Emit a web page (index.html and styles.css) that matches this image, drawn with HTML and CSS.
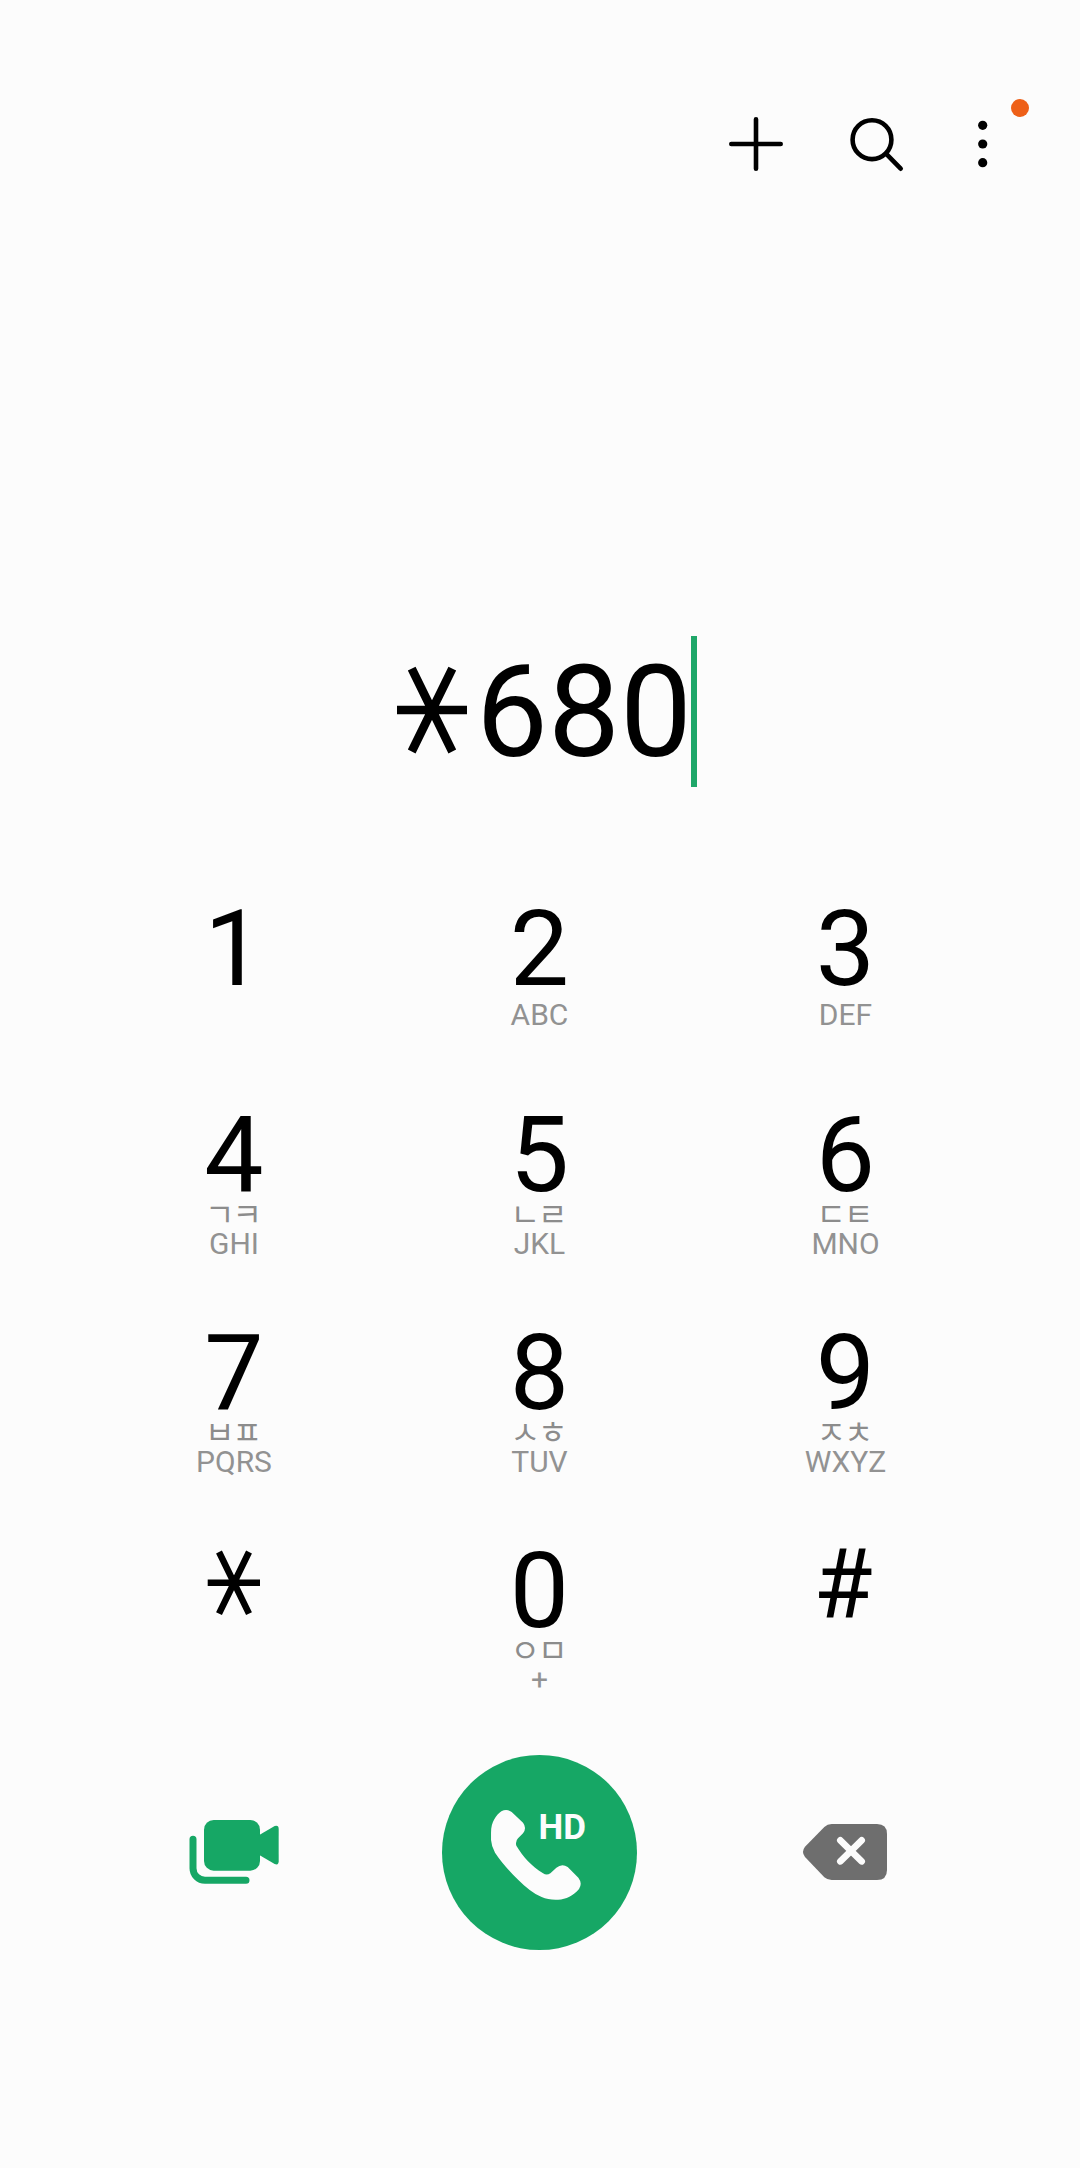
FILE: index.html
```html
<!DOCTYPE html>
<html lang="ko">
<head>
<meta charset="utf-8">
<title>Phone</title>
<link rel="stylesheet" href="styles.css">
</head>
<body>
<main class="dialer">
  <header class="toolbar">
    <svg class="tool" viewBox="0 0 60 60" aria-label="Add"><path d="M5.3 30H54.7M30 5.3V54.7"/></svg>
    <svg class="tool" viewBox="0 0 60 60" aria-label="Search"><circle cx="26" cy="25.7" r="19.4"/><path d="M40 39.7L54.7 54.7"/></svg>
    <div class="more">
      <svg class="tool tool-dots" viewBox="0 0 60 60" aria-label="More"><circle cx="29.7" cy="11.3" r="4.6"/><circle cx="29.7" cy="30" r="4.6"/><circle cx="29.7" cy="48.7" r="4.6"/></svg>
      <span class="badge"></span>
    </div>
  </header>

  <div class="number">
    <svg class="star-large" viewBox="0 0 88 90" aria-label="*"><path d="M9 45H79M23.7 3.6L64.3 86.5M64.3 3.6L23.7 86.5"/></svg>
    <span class="digits">680</span>
    <span class="cursor"></span>
  </div>

  <section class="keypad">
    <div class="key"><span class="digit">1</span></div>
    <div class="key"><span class="digit">2</span><span class="latin">ABC</span></div>
    <div class="key"><span class="digit">3</span><span class="latin">DEF</span></div>
    <div class="key"><span class="digit">4</span><span class="jamo">ㄱㅋ</span><span class="latin">GHI</span></div>
    <div class="key"><span class="digit">5</span><span class="jamo">ㄴㄹ</span><span class="latin">JKL</span></div>
    <div class="key"><span class="digit">6</span><span class="jamo">ㄷㅌ</span><span class="latin">MNO</span></div>
    <div class="key"><span class="digit">7</span><span class="jamo">ㅂㅍ</span><span class="latin">PQRS</span></div>
    <div class="key"><span class="digit">8</span><span class="jamo">ㅅㅎ</span><span class="latin">TUV</span></div>
    <div class="key"><span class="digit">9</span><span class="jamo">ㅈㅊ</span><span class="latin">WXYZ</span></div>
    <div class="key"><svg class="star" viewBox="0 0 60 84" aria-label="*"><path d="M3.7 41.7H56M15 11L45 72.6M45 11L15 72.6"/></svg></div>
    <div class="key"><span class="digit">0</span><span class="jamo">ㅇㅁ</span><span class="latin">+</span></div>
    <div class="key"><span class="hash">#</span></div>
  </section>

  <footer class="actions">
    <svg class="video" viewBox="0 0 384 315" aria-label="Video call">
      <rect x="102" y="60" width="168" height="152" rx="29"/>
      <path d="M264 107L314 78Q326 74 326 87V184Q326 197 314 192L264 163Z"/>
      <path class="video-back" d="M69 118V205A36 36 0 0 0 105 241H228"/>
    </svg>
    <div class="call">
      <svg viewBox="0 0 195 195" aria-label="Call">
        <path transform="translate(-12.3 -15) scale(.33333)" d="M184 300V278C184 245 200 225 215 214Q231 205 246 216L280 248Q292 264 280 280L265 295Q256 304 260 317C280 350 305 378 340 400Q351 407 362 400L380 383Q397 369 414 381L446 413Q459 430 448 447C430 468 410 478 385 479C350 481 325 468 300 450C260 418 225 380 196 338Q185 318 184 300Z"/>
        <text x="96.6" y="84">HD</text>
      </svg>
    </div>
    <svg class="erase" viewBox="3 0 330 255" aria-label="Backspace">
      <path d="M128 42H264Q294 42 294 72V180Q294 210 264 210H128Q115 210 106 202L48 141Q36 125 48 110L106 51Q115 42 128 42Z"/>
      <path class="erase-x" d="M154 91L218 154M218 91L154 154"/>
    </svg>
  </footer>
</main>
</body>
</html>
```
FILE: styles.css
```css
* { box-sizing: border-box; }

body {
  margin: 0;
  background: #fcfcfc;
  color: #000;
  font-family: Roboto, "Noto Sans CJK KR", sans-serif;
}

.dialer {
  display: flex;
  flex-direction: column;
  width: 1080px;
  height: 2168px;
}

.toolbar {
  display: flex;
  justify-content: flex-end;
  gap: 60px;
  height: 174px;
  padding: 114px 67px 0 0;
}

.tool {
  display: block;
  width: 60px;
  height: 60px;
  fill: none;
  stroke: #000;
  stroke-width: 4.6;
  stroke-linecap: round;
}

.tool-dots { fill: #000; stroke: none; }

.more { position: relative; margin-left: -13px; }

.badge {
  position: absolute;
  top: -15px;
  left: 58px;
  width: 18px;
  height: 18px;
  border-radius: 50%;
  background: #ee6018;
}

.number {
  display: flex;
  align-items: center;
  height: 151px;
  margin-top: 462px;
  padding-left: 388px;
}

.star-large {
  width: 88px;
  height: 90px;
  margin-top: -3px;
  fill: none;
  stroke: #000;
  stroke-width: 8.6;
}

.digits { padding-top: 2px; font-size: 128px; line-height: 151px; }

.cursor {
  width: 6px;
  height: 151px;
  margin-left: -1px;
  background: #1fa769;
}

.keypad {
  display: grid;
  grid-template-columns: 306px 305px 307px;
  grid-template-rows: 206px 218px 218px 214px;
  margin-top: 112px;
  padding-left: 81px;
}

.key {
  display: flex;
  flex-direction: column;
  align-items: center;
}

.key:nth-child(-n+3) .latin { margin-top: 1px; }

.digit { height: 100px; font-size: 105.5px; line-height: 100px; }

.jamo {
  height: 22px;
  margin: -4px 3px 4px 0;
  font: 32px/22px "Noto Sans CJK KR", sans-serif;
  letter-spacing: -2px;
  color: #8c8c8c;
}

.latin {
  margin-top: 2px;
  font-size: 30px;
  line-height: 30px;
  color: #929292;
}

.star {
  width: 60px;
  height: 84px;
  fill: none;
  stroke: #000;
  stroke-width: 6.5;
}

.hash { margin-right: 5px; font-size: 96px; line-height: 86px; }

.actions {
  display: grid;
  grid-template-columns: 306px 305px 306px;
  place-items: center;
  height: 195px;
  padding-left: 81px;
}

.video { width: 128px; height: 105px; fill: #16a765; }

.video-back {
  fill: none;
  stroke: #16a765;
  stroke-width: 21;
  stroke-linecap: round;
}

.call {
  width: 195px;
  height: 195px;
  border-radius: 50%;
  background: #16a765;
  fill: #fcfcfc;
}

.call text { font-size: 35px; font-weight: 700; }

.erase { width: 110px; height: 85px; fill: #6e6e6e; }

.erase-x {
  stroke: #fcfcfc;
  stroke-width: 20;
  stroke-linecap: round;
}
```
